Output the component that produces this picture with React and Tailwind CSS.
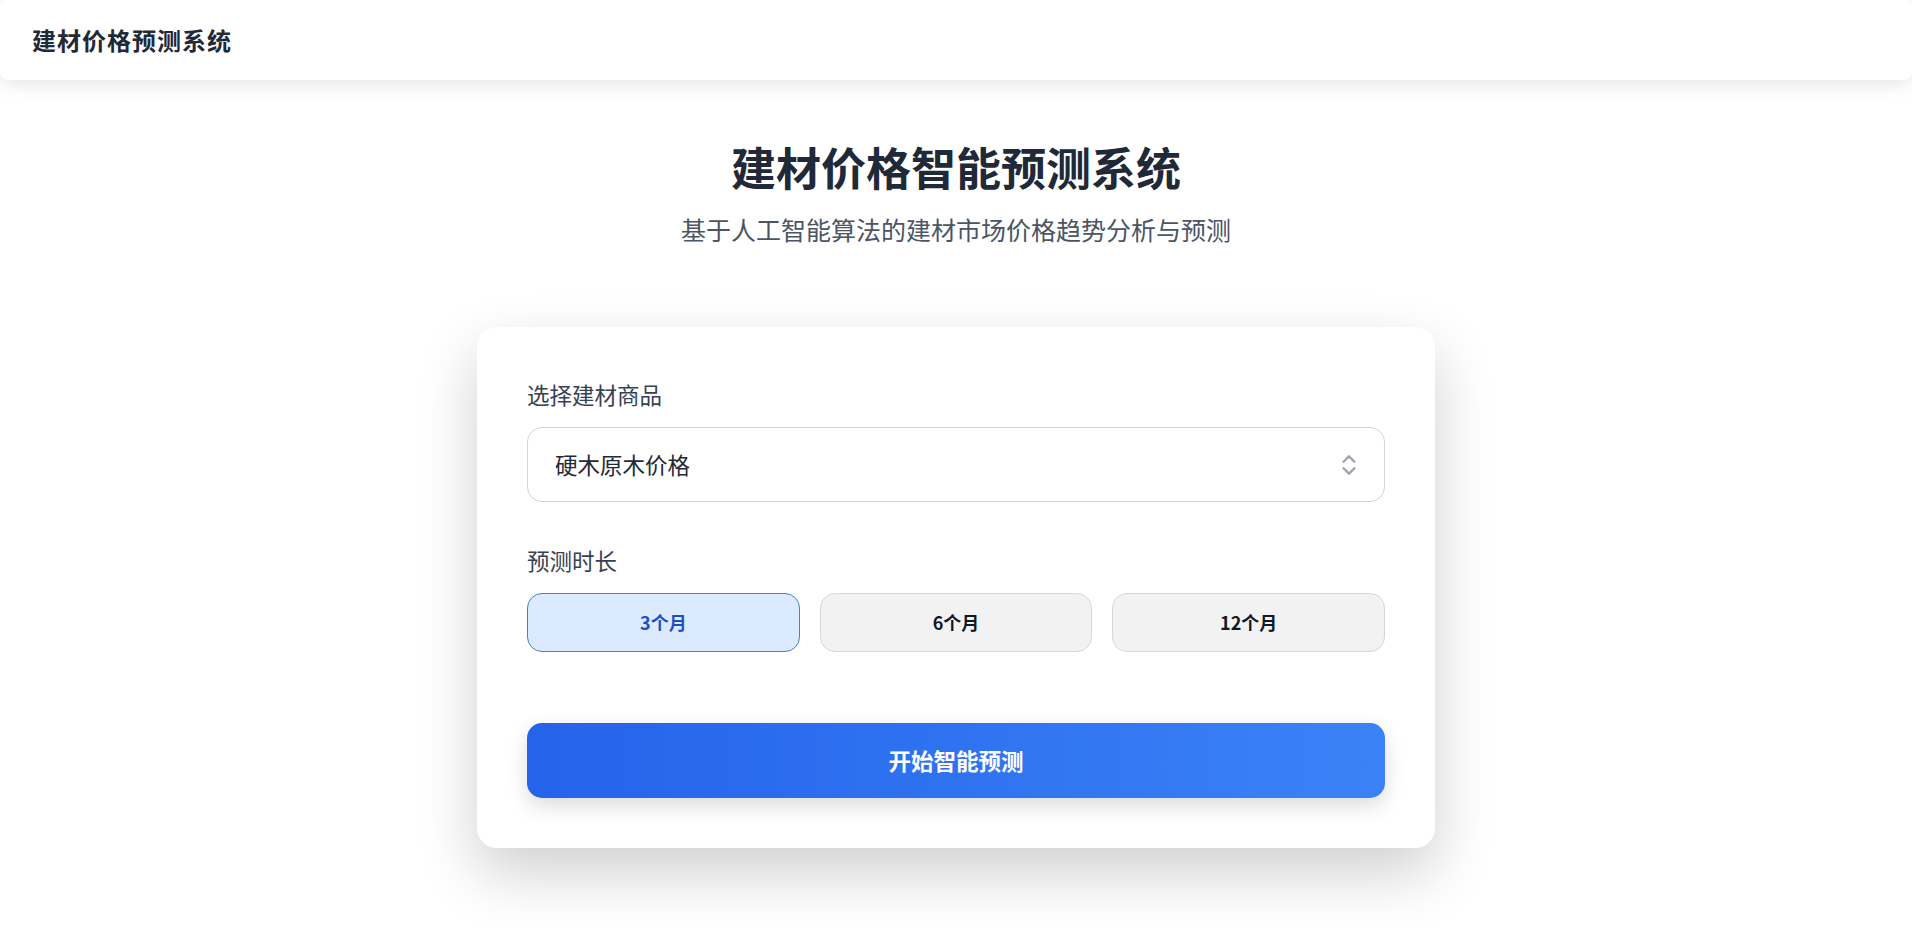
import { useState } from 'react';
import { ChevronsUpDown } from 'lucide-react';

const periods = ['3个月', '6个月', '12个月'];

const App = () => {
  const [period, setPeriod] = useState('3个月');

  return (
    <div className="min-h-screen bg-white text-[#1f2937] font-['Noto_Sans_CJK_SC','Noto_Sans',sans-serif]">
      {/* Header */}
      <header className="h-[80px] flex items-center px-[32px] bg-white rounded-lg shadow-[0_4px_18px_rgba(0,0,0,0.10)]">
        <h1 className="text-[24px] font-bold leading-none text-[#1f2937] tracking-[1px]">
          建材价格预测系统
        </h1>
      </header>

      <main className="pt-[62px] pb-[80px] flex flex-col items-center">
        <h2 className="text-[45px] leading-[50px] font-bold text-[#1f2937] mb-[20px]">
          建材价格智能预测系统
        </h2>
        <p className="text-[25px] leading-[35px] text-[#4b5563] mb-[80px]">
          基于人工智能算法的建材市场价格趋势分析与预测
        </p>

        {/* Card */}
        <div className="w-[958px] bg-white rounded-[20px] p-[50px] shadow-[0_25px_60px_rgba(0,0,0,0.19)]">
          <label className="block text-[22.5px] leading-[35px] text-[#374151] mb-[15px]">
            选择建材商品
          </label>
          <div className="h-[75px] rounded-[15px] border border-[#d1d5db] flex items-center justify-between pl-[27px] pr-[22px]">
            <span className="text-[22.5px] text-[#1f2937]">硬木原木价格</span>
            <ChevronsUpDown className="w-[26px] h-[26px] text-[#9ca3af]" strokeWidth={2.2} />
          </div>

          <label className="block text-[22.5px] leading-[35px] text-[#374151] mt-[41px] mb-[15px]">
            预测时长
          </label>
          <div className="grid grid-cols-3 gap-[20px]">
            {periods.map((p) => (
              <button
                key={p}
                onClick={() => setPeriod(p)}
                className={`h-[59px] rounded-[15px] border text-[18px] font-bold ${
                  period === p
                    ? 'bg-[#dbeafe] border-[#4a80c4] text-[#1e4fc0]'
                    : 'bg-[#f2f2f2] border-[#d6d6d6] text-[#111827]'
                }`}
              >
                {p}
              </button>
            ))}
          </div>

          <button className="mt-[71px] w-full h-[75px] rounded-[15px] bg-linear-to-r from-[#2563eb] to-[#3b82f6] text-white text-[22.5px] font-bold shadow-[0_8px_20px_rgba(0,0,0,0.14)]">
            开始智能预测
          </button>
        </div>
      </main>
    </div>
  );
};

export default App;
